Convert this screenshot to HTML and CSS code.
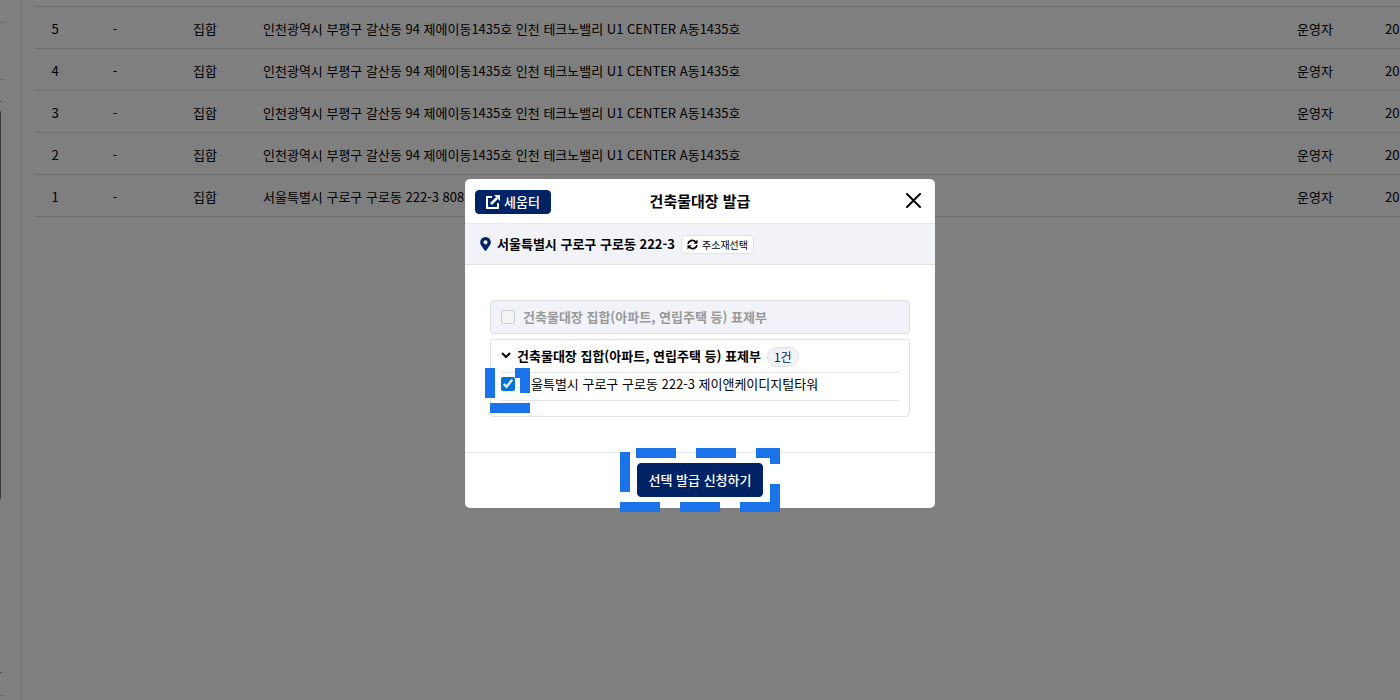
FILE: index.html
```html
<!DOCTYPE html>
<html lang="ko">
<head>
  <meta charset="UTF-8">
  <title>건축물대장 발급</title>
  <link rel="stylesheet" href="styles.css">
</head>
<body>
  <div class="page">
    <aside class="side">
      <div class="side-top"></div>
      <div class="side-filter"></div>
      <div class="side-scroll">
        <div class="side-arrow"></div>
        <div class="side-thumb"></div>
        <div class="side-arrow"></div>
      </div>
    </aside>
    <main class="content">
      <table class="list">
        <colgroup>
          <col class="col-no"><col class="col-state"><col class="col-type"><col><col class="col-user"><col class="col-date">
        </colgroup>
        <tbody>
          <tr><td>5</td><td>-</td><td>집합</td><td class="addr">인천광역시 부평구 갈산동 94 제에이동1435호 인천 테크노밸리 U1 CENTER A동1435호</td><td>운영자</td><td class="date">202</td></tr>
          <tr><td>4</td><td>-</td><td>집합</td><td class="addr">인천광역시 부평구 갈산동 94 제에이동1435호 인천 테크노밸리 U1 CENTER A동1435호</td><td>운영자</td><td class="date">202</td></tr>
          <tr><td>3</td><td>-</td><td>집합</td><td class="addr">인천광역시 부평구 갈산동 94 제에이동1435호 인천 테크노밸리 U1 CENTER A동1435호</td><td>운영자</td><td class="date">202</td></tr>
          <tr><td>2</td><td>-</td><td>집합</td><td class="addr">인천광역시 부평구 갈산동 94 제에이동1435호 인천 테크노밸리 U1 CENTER A동1435호</td><td>운영자</td><td class="date">202</td></tr>
          <tr><td>1</td><td>-</td><td>집합</td><td class="addr">서울특별시 구로구 구로동 222-3 808</td><td>운영자</td><td class="date">202</td></tr>
        </tbody>
      </table>
    </main>
  </div>

  <div class="overlay">
    <section class="modal" role="dialog" aria-labelledby="modalTitle">
      <header class="modal-header">
        <div class="header-left">
          <button type="button" class="btn btn-seumter">
            <svg width="14" height="14" viewBox="0 0 14 14" fill="none" stroke="currentColor" stroke-width="2">
              <path d="M6 2H1V13H12V8"/>
              <path d="M5 9L11 3" stroke-width="2.500"/>
              <path d="M8 0H14V6Z" fill="currentColor" stroke="none"/>
            </svg>
            세움터
          </button>
        </div>
        <h2 id="modalTitle">건축물대장 발급</h2>
        <div class="header-right">
          <button type="button" class="btn-close" aria-label="닫기">
            <svg width="15" height="15" viewBox="0 0 15 15" stroke="currentColor" stroke-width="2" stroke-linecap="round">
              <path d="M1 1L14 14M14 1L1 14"/>
            </svg>
          </button>
        </div>
      </header>

      <div class="modal-address">
        <svg width="11" height="14" viewBox="0 0 11 14" fill="#002366" fill-rule="evenodd">
          <path d="M5.500 0A5.300 5.300 0 0 0 .2 5.300C.2 7.500 1.500 9 4.800 13.600Q5.500 14.400 6.200 13.600C9.500 9 10.800 7.500 10.800 5.300A5.300 5.300 0 0 0 5.500 0ZM5.500 3.200A2.100 2.100 0 1 1 5.500 7.400A2.100 2.100 0 1 1 5.500 3.200Z"/>
        </svg>
        <strong>서울특별시 구로구 구로동 222-3</strong>
        <button type="button" class="btn-reselect">
          <svg width="11" height="11" viewBox="0 0 512 512" fill="none" stroke="currentColor" stroke-width="80">
            <path d="M48 228C70 85 275 0 405 130"/>
            <path d="M464 284C442 427 237 512 107 382"/>
            <path d="M490 28V220H298Z" fill="currentColor" stroke="none"/>
            <path d="M22 484V292H214Z" fill="currentColor" stroke="none"/>
          </svg>
          주소재선택
        </button>
      </div>

      <div class="modal-body">
        <label class="doc-disabled">
          <input type="checkbox" class="check" disabled>
          건축물대장 집합(아파트, 연립주택 등) 표제부
        </label>
        <div class="doc-group">
          <div class="doc-title">
            <svg width="10" height="7" viewBox="0 0 10 7" fill="none" stroke="currentColor" stroke-width="2">
              <path d="M1 1L5 5L9 1"/>
            </svg>
            <strong>건축물대장 집합(아파트, 연립주택 등) 표제부</strong>
            <span class="count">1건</span>
          </div>
          <div class="doc-row">
            <input type="checkbox" class="check" id="doc1" checked>
            <label for="doc1">서울특별시 구로구 구로동 222-3 제이앤케이디지털타워</label>
            <svg class="mark mark-check" width="45" height="45" viewBox="0 0 45 45" fill="#1a73e8">
              <path d="M0 0H10V30H0ZM30 0H45V25H35V10H30ZM5 35H45V45H5Z"/>
            </svg>
          </div>
        </div>
      </div>

      <footer class="modal-footer">
        <div class="submit-wrap">
          <button type="button" class="btn btn-submit">선택 발급 신청하기</button>
          <svg class="mark mark-submit" width="160" height="64" viewBox="0 0 160 64" fill="#1a73e8">
            <path d="M0 4H10V44H0ZM16 0H56V10H16ZM76 0H116V10H76ZM136 0H160V16H150V10H136ZM150 36H160V64H120V54H150ZM0 54H40V64H0ZM60 54H100V64H60Z"/>
          </svg>
        </div>
      </footer>
    </section>
  </div>
</body>
</html>
```

FILE: styles.css
```css
* {
  box-sizing: border-box;
}
body {
  margin: 0;
  font-family: "Noto Sans CJK KR", "Noto Sans", sans-serif;
  font-size: 13px;
  line-height: 20px;
  color: #000;
  background: #fff;
}
button {
  font-family: inherit;
  cursor: pointer;
}

/* list page */
.page {
  display: flex;
  height: 100vh;
  overflow: hidden;
}
.side {
  display: flex;
  flex-direction: column;
  flex: none;
  width: 22px;
  padding: 0 15px 4px 0;
  border-right: 2px solid #eee;
}
.side-top {
  height: 23px;
  border-bottom: 1px solid #dadada;
}
.side-filter {
  height: 57px;
  border-bottom: 1px solid #dadada;
}
.side-scroll {
  display: flex;
  flex-direction: column;
  flex: 1;
  padding: 21px 0 22px;
  border-bottom: 1px solid #dadada;
}
.side-arrow {
  width: 1px;
  height: 1px;
  background: #555;
}
.side-thumb {
  width: 1px;
  height: 388px;
  margin: 9px 0 auto;
  background: #777;
}
.content {
  flex: 1;
  min-width: 0;
  padding: 6px 0 0 13px;
}
.list {
  width: calc(100% + 55px);
  table-layout: fixed;
  border-collapse: collapse;
  border-top: 1px solid #dadada;
}
.list td {
  height: 42px;
  padding: 2px 0 0;
  border-bottom: 1px solid #dadada;
  text-align: center;
}
.list .addr {
  padding-left: 8px;
  text-align: left;
}
.list .date {
  padding-left: 30px;
  text-align: left;
}
.col-state, .col-user {
  width: 80px;
}
.col-no {
  width: 40px;
}
.col-type, .col-date {
  width: 100px;
}

/* modal */
.overlay {
  position: fixed;
  inset: 0;
  display: flex;
  align-items: center;
  justify-content: center;
  padding-bottom: 14px;
  background: rgba(0, 0, 0, 0.5);
}
.modal {
  width: 470px;
  max-width: 100%;
  border-radius: 5px;
  background: #fff;
}
.modal-header {
  display: grid;
  grid-template-columns: 1fr auto 1fr;
  align-items: center;
  height: 45px;
  padding: 0 10px;
  border-bottom: 1px solid #e8e8e8;
}
.modal-header h2 {
  margin: 0;
  font-size: 15px;
}
.header-left {
  padding-top: 3px;
}
.header-right {
  display: flex;
  justify-content: flex-end;
}
.btn {
  border: 1px solid #002366;
  border-radius: 4px;
  font-size: 13px;
  font-weight: 500;
  line-height: 20px;
  color: #fff;
  background: #002366;
}
.btn-seumter {
  display: flex;
  align-items: center;
  gap: 4px;
  height: 24px;
  padding: 0 10px;
}
.btn-close {
  display: flex;
  padding: 4px;
  border: 0;
  background: none;
}
.modal-address {
  display: flex;
  align-items: center;
  height: 41px;
  padding: 0 15px;
  gap: 6px;
  border-bottom: 1px solid #e0e2e6;
  background: #f1f3f8;
}
.btn-reselect {
  display: flex;
  align-items: center;
  gap: 4px;
  height: 19px;
  margin-top: 2px;
  padding: 0 5px;
  border: 1px solid #e0e2e6;
  border-radius: 4px;
  font-size: 10px;
  color: #000;
  background: #fff;
}
.modal-body {
  padding: 35px 25px;
}
.doc-disabled {
  display: flex;
  align-items: center;
  gap: 8px;
  height: 34px;
  margin-bottom: 5px;
  padding: 0 10px;
  border: 1px solid #dfe0e3;
  border-radius: 4px;
  font-weight: 700;
  color: #999;
  background: #f1f3f8;
}
.check {
  flex: none;
  width: 14px;
  height: 14px;
  margin: 0;
  accent-color: #0075d6;
}
.doc-group {
  padding: 0 10px 15px;
  border: 1px solid #dfe0e3;
  border-radius: 4px;
}
.doc-title {
  display: flex;
  align-items: center;
  gap: 6px;
  height: 33px;
  border-bottom: 1px solid #e4e4e4;
}
.count {
  height: 20px;
  margin-top: 2px;
  padding: 0 6px;
  border: 1px solid #dfe0e3;
  border-radius: 10px;
  font-size: 12px;
  line-height: 18px;
  color: #002366;
  background: #f1f3f8;
}
.doc-row {
  position: relative;
  display: flex;
  align-items: center;
  gap: 4px;
  height: 28px;
  padding-bottom: 4px;
  border-bottom: 1px solid #e4e4e4;
}
.modal-footer {
  display: flex;
  justify-content: center;
  padding: 10px 10px 11px;
  border-top: 1px solid #e8e8e8;
}
.submit-wrap {
  position: relative;
}
.btn-submit {
  display: block;
  height: 34px;
  padding: 0 11px;
}

/* dashed guide marks */
.mark {
  position: absolute;
  pointer-events: none;
}
.mark-check {
  top: -5px;
  left: -16px;
}
.mark-submit {
  top: -15px;
  left: -17px;
}
```
